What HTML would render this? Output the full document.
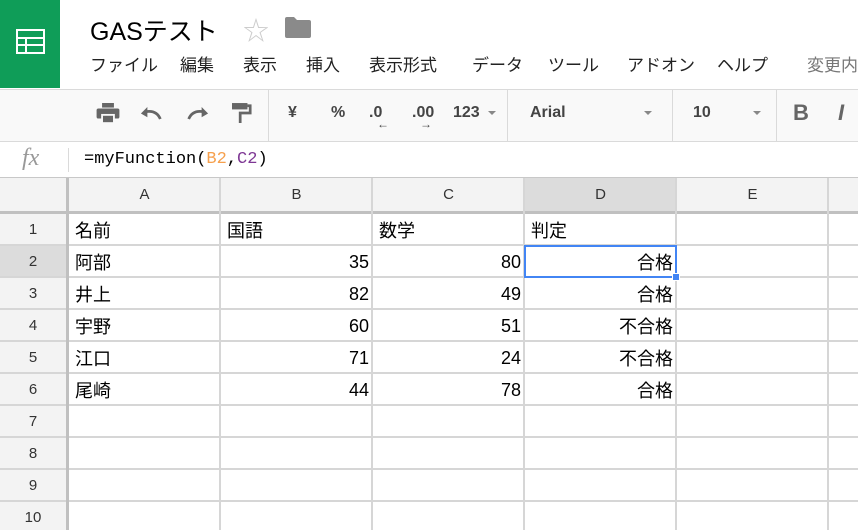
<!DOCTYPE html>
<html><head><meta charset="utf-8"><style>
*{margin:0;padding:0;box-sizing:border-box}
body{width:858px;height:530px;overflow:hidden;background:#fff;font-family:"Liberation Sans","Noto Sans CJK JP",sans-serif;position:relative}
.a{position:absolute}
.menu span{position:absolute;top:51px;font-size:17px;color:#222;white-space:nowrap}
.tb{position:absolute;top:89px;left:0;width:858px;height:53px;background:#f9f9f9;border-top:1px solid #dadada;border-bottom:1px solid #dadada}
.tbt{position:absolute;top:104px;font-weight:bold;font-size:16px;color:#444}
.vl{position:absolute;width:1px;background:#dadada}
.hl{position:absolute;height:2px;background:#d6d6d6;left:0;width:858px}
.cl{position:absolute;width:2px;background:#d6d6d6;top:178px;height:352px}
.ch{position:absolute;top:178px;height:34px;font-size:15px;color:#333;text-align:center;line-height:34px}
.rh{position:absolute;left:0;width:66px;text-align:center;font-size:15px;color:#333}
.c{position:absolute;font-size:18px;color:#000;white-space:nowrap;line-height:20px}
.j{margin-top:1px}
.r{text-align:right}
</style></head><body>
<div class="a" style="left:0;top:0;width:60px;height:88px;background:#0f9d58"></div>
<svg class="a" style="left:16px;top:29px" width="29" height="25" viewBox="0 0 29 25"><rect x="1" y="1" width="27" height="23" fill="none" stroke="#fff" stroke-width="2"/><line x1="1" y1="9" x2="28" y2="9" stroke="#fff" stroke-width="2"/><line x1="1" y1="16" x2="28" y2="16" stroke="#fff" stroke-width="2"/><line x1="10" y1="9" x2="10" y2="24" stroke="#fff" stroke-width="2"/></svg>
<div class="a" style="left:90px;top:12px;font-size:25px;color:#000">GASテスト</div>
<div class="a" style="left:243px;top:11px;font-size:26px;color:#ccc">☆</div>
<svg class="a" style="left:285px;top:17px" width="26" height="21" viewBox="0 0 26 21"><path d="M0 2 Q0 0 2 0 H9 L12 3 H24 Q26 3 26 5 V19 Q26 21 24 21 H2 Q0 21 0 19Z" fill="#8a8a8a"/></svg>
<div class="menu">
<span style="left:90px">ファイル</span><span style="left:180px">編集</span><span style="left:243px">表示</span><span style="left:306px">挿入</span><span style="left:369px">表示形式</span><span style="left:472px">データ</span><span style="left:548px">ツール</span><span style="left:627px">アドオン</span><span style="left:717px">ヘルプ</span><span style="left:807px;color:#777">変更内</span>
</div>
<div class="tb"></div>
<svg class="a" style="left:96px;top:103px" width="24" height="21" viewBox="0 0 25 23"><rect x="6" y="0" width="13" height="5" fill="#666"/><rect x="0" y="6" width="25" height="11" rx="2" fill="#666"/><rect x="6" y="13" width="13" height="9" fill="#666" stroke="#f9f9f9" stroke-width="2"/></svg>
<svg class="a" style="left:140px;top:107px" width="24" height="13" viewBox="0 0 26 14"><path d="M22 13 Q18 3 6 5" fill="none" stroke="#666" stroke-width="3"/><path d="M1 7 L8 0 L8 11Z" fill="#666"/></svg>
<svg class="a" style="left:185px;top:107px" width="24" height="13" viewBox="0 0 26 14"><path d="M4 13 Q8 3 20 5" fill="none" stroke="#666" stroke-width="3"/><path d="M25 7 L18 0 L18 11Z" fill="#666"/></svg>
<svg class="a" style="left:232px;top:103px" width="20" height="21" viewBox="0 0 22 23"><rect x="0" y="0" width="17" height="7" fill="#666"/><path d="M17 3 H20 V11 H9 V22" fill="none" stroke="#666" stroke-width="3"/></svg>
<div class="vl" style="left:268px;top:89px;height:53px"></div>
<div class="tbt" style="left:288px">¥</div>
<div class="tbt" style="left:331px">%</div>
<div class="tbt" style="left:369px">.0</div>
<div class="a" style="left:377px;top:117px;font-size:12px;color:#444;font-weight:bold">←</div>
<div class="tbt" style="left:412px">.00</div>
<div class="a" style="left:420px;top:117px;font-size:12px;color:#444;font-weight:bold">→</div>
<div class="tbt" style="left:453px">123</div>
<div class="a" style="left:488px;top:111px;border:4px solid transparent;border-top:4px solid #888"></div>
<div class="vl" style="left:507px;top:89px;height:53px"></div>
<div class="tbt" style="left:530px">Arial</div>
<div class="a" style="left:644px;top:111px;border:4px solid transparent;border-top:4px solid #888"></div>
<div class="vl" style="left:672px;top:89px;height:53px"></div>
<div class="tbt" style="left:693px">10</div>
<div class="a" style="left:753px;top:111px;border:4px solid transparent;border-top:4px solid #888"></div>
<div class="vl" style="left:776px;top:89px;height:53px"></div>
<div class="a" style="left:793px;top:100px;font-size:22px;font-weight:bold;color:#666">B</div>
<div class="a" style="left:838px;top:100px;font-size:22px;font-weight:bold;font-style:italic;color:#666">I</div>
<div class="a" style="left:22px;top:145px;font-size:24px;font-style:italic;color:#999;font-family:'Liberation Serif',serif">fx</div>
<div class="vl" style="left:68px;top:148px;height:24px"></div>
<div class="a" style="left:84px;top:150px;font-size:17px;font-family:'Liberation Mono',monospace;color:#000">=myFunction(<span style="color:#f6a04d">B2</span>,<span style="color:#7e3794">C2</span>)</div>
<div class="a" style="left:0;top:177px;width:858px;height:1px;background:#c8c8c8"></div>
<div class="a" style="left:0;top:178px;width:858px;height:34px;background:#f3f3f3"></div>
<div class="a" style="left:0;top:212px;width:68px;height:318px;background:#f3f3f3"></div>
<div class="a" style="left:525px;top:178px;width:151px;height:34px;background:#dcdcdc"></div>
<div class="a" style="left:0;top:246px;width:68px;height:31px;background:#dcdcdc"></div>
<div class="hl" style="top:211px;height:3px;background:#c0c0c0"></div>
<div class="hl" style="top:244px"></div><div class="hl" style="top:276px"></div><div class="hl" style="top:308px"></div><div class="hl" style="top:340px"></div><div class="hl" style="top:372px"></div><div class="hl" style="top:404px"></div><div class="hl" style="top:436px"></div><div class="hl" style="top:468px"></div><div class="hl" style="top:500px"></div>
<div class="cl" style="left:66px;width:3px;background:#c0c0c0"></div>
<div class="cl" style="left:219px"></div><div class="cl" style="left:371px"></div><div class="cl" style="left:523px"></div><div class="cl" style="left:675px"></div><div class="cl" style="left:827px"></div>
<div class="ch" style="left:69px;width:151px">A</div><div class="ch" style="left:221px;width:151px">B</div><div class="ch" style="left:373px;width:151px">C</div><div class="ch" style="left:525px;width:151px">D</div><div class="ch" style="left:677px;width:151px">E</div>
<div class="rh" style="top:221px">1</div><div class="rh" style="top:253px">2</div><div class="rh" style="top:285px">3</div><div class="rh" style="top:317px">4</div><div class="rh" style="top:349px">5</div><div class="rh" style="top:381px">6</div><div class="rh" style="top:413px">7</div><div class="rh" style="top:445px">8</div><div class="rh" style="top:477px">9</div><div class="rh" style="top:509px">10</div>
<div class="c j" style="left:75px;top:220px">名前</div><div class="c j" style="left:227px;top:220px">国語</div><div class="c j" style="left:379px;top:220px">数学</div><div class="c j" style="left:531px;top:220px">判定</div>
<div class="c j" style="left:75px;top:252px">阿部</div><div class="c j" style="left:75px;top:284px">井上</div><div class="c j" style="left:75px;top:316px">宇野</div><div class="c j" style="left:75px;top:348px">江口</div><div class="c j" style="left:75px;top:380px">尾崎</div>
<div class="c r" style="left:221px;width:148px;top:252px">35</div><div class="c r" style="left:221px;width:148px;top:284px">82</div><div class="c r" style="left:221px;width:148px;top:316px">60</div><div class="c r" style="left:221px;width:148px;top:348px">71</div><div class="c r" style="left:221px;width:148px;top:380px">44</div>
<div class="c r" style="left:373px;width:148px;top:252px">80</div><div class="c r" style="left:373px;width:148px;top:284px">49</div><div class="c r" style="left:373px;width:148px;top:316px">51</div><div class="c r" style="left:373px;width:148px;top:348px">24</div><div class="c r" style="left:373px;width:148px;top:380px">78</div>
<div class="c r j" style="left:525px;width:148px;top:252px">合格</div><div class="c r j" style="left:525px;width:148px;top:284px">合格</div><div class="c r j" style="left:525px;width:148px;top:316px">不合格</div><div class="c r j" style="left:525px;width:148px;top:348px">不合格</div><div class="c r j" style="left:525px;width:148px;top:380px">合格</div>
<div class="a" style="left:524px;top:245px;width:153px;height:33px;border:2px solid #4285f4"></div>
<div class="a" style="left:672px;top:273px;width:8px;height:8px;background:#4285f4;border:1px solid #fff"></div>
</body></html>
